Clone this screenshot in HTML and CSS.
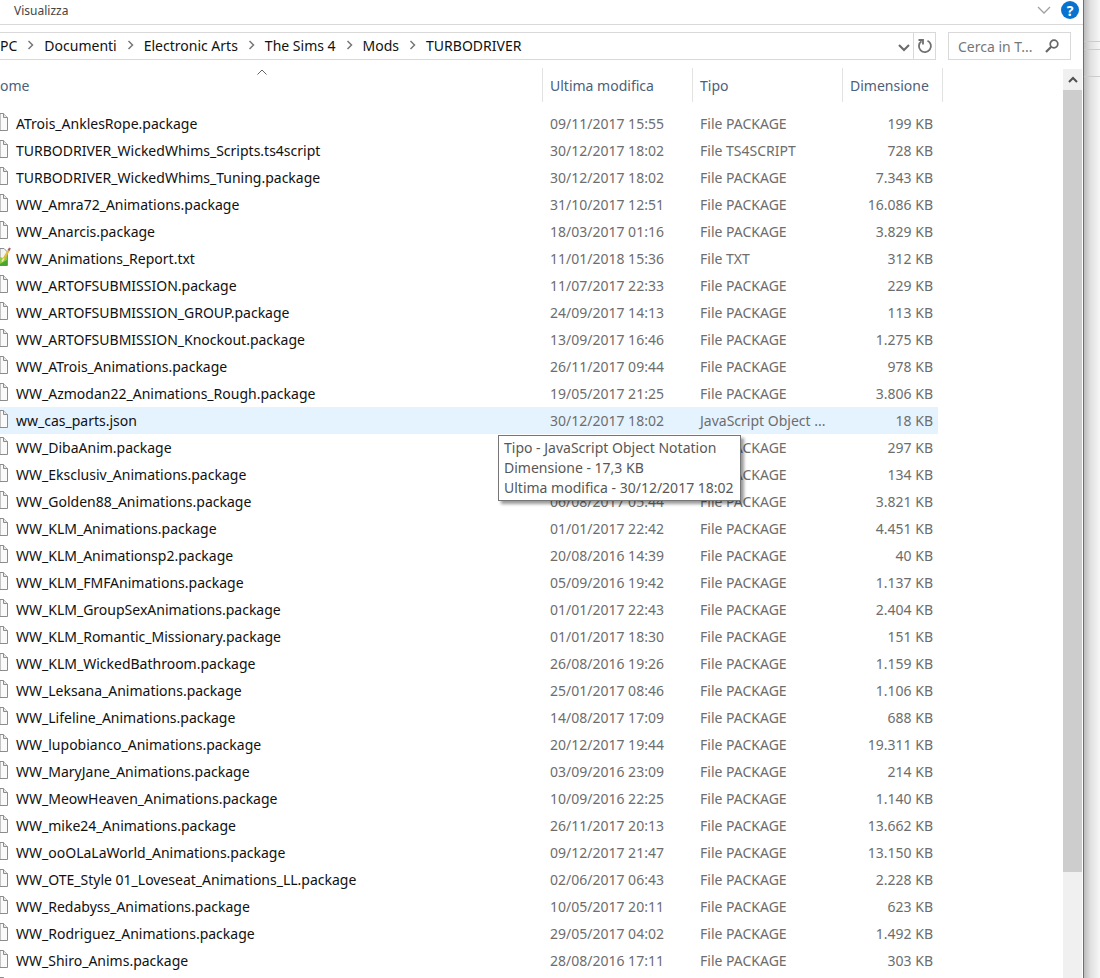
FILE: index.html
```html
<!DOCTYPE html>
<html lang="it">
<head>
    <meta charset="UTF-8">
    <meta name="viewport" content="width=device-width, initial-scale=1.0">
    <title>TURBODRIVER</title>
    <link rel="stylesheet" href="styles.css">
</head>
<body>
    <svg class="simboli">
        <symbol id="file" viewBox="0 0 8 18">
            <path d="M0 .5H3.500L7.500 4.500V17.500H0Z" fill="#fafafa" stroke="#8c8c8c"/>
            <path d="M3.500 .5V4.500H7.500" fill="#e8e8e8" stroke="#8c8c8c"/>
        </symbol>
        <symbol id="txt" viewBox="0 0 11 20">
            <path d="M0 1.500H4L7.500 5V18.500H0Z" fill="#f4f4ee" stroke="#8c8c8c"/>
            <path d="M0 10L3 11L7 8V19H0Z" fill="#8ccb3f"/>
            <path d="M0 17L7 13V19H0Z" fill="#4aa52f"/>
            <path d="M9 3L3.500 12" stroke="#e9b93c" stroke-width="2.200"/>
            <path d="M10 1L8.500 3.500" stroke="#a8636a" stroke-width="2.200"/>
            <path d="M3.800 11.500L2 14.500" stroke="#f6e3b0" stroke-width="1.600"/>
        </symbol>
        <symbol id="freccia" viewBox="0 0 7 10">
            <path d="M1.500 1L5.500 5L1.500 9" fill="none" stroke="#767676" stroke-width="1.500"/>
        </symbol>
    </svg>

    <div class="finestra">
        <div class="ribbon">
            <button class="scheda">Visualizza</button>
            <button class="riduci" aria-label="Riduci barra multifunzione">
                <svg width="14" height="8" viewBox="0 0 14 8"><path d="M1 1L7 7L13 1" fill="none" stroke="#a0a0a0" stroke-width="1.300"/></svg>
            </button>
            <button class="aiuto" aria-label="Guida">?</button>
        </div>

        <div class="navigazione">
            <div class="indirizzo">
                <nav class="percorso">
                    <a href="#">PC</a>
                    <svg><use href="#freccia"/></svg>
                    <a href="#">Documenti</a>
                    <svg><use href="#freccia"/></svg>
                    <a href="#">Electronic Arts</a>
                    <svg><use href="#freccia"/></svg>
                    <a href="#">The Sims 4</a>
                    <svg><use href="#freccia"/></svg>
                    <a href="#">Mods</a>
                    <svg><use href="#freccia"/></svg>
                    <a href="#">TURBODRIVER</a>
                </nav>
                <button class="precedenti" aria-label="Percorsi precedenti">
                    <svg width="12" height="8" viewBox="0 0 12 8"><path d="M1 1L6 6L11 1" fill="none" stroke="#6a6a6a" stroke-width="2"/></svg>
                </button>
                <button class="aggiorna" aria-label="Aggiorna">
                    <svg width="16" height="16" viewBox="0 0 16 16"><path d="M10.500 2.700A6 6 0 1 1 4.500 3.200" fill="none" stroke="#6f6f6f" stroke-width="1.800"/><path d="M1.500 2H6V6.500" fill="none" stroke="#6f6f6f" stroke-width="1.800"/></svg>
                </button>
            </div>
            <div class="cerca">
                <input type="text" aria-label="Cerca" placeholder="Cerca in T...">
                <svg width="14" height="14" viewBox="0 0 14 14"><circle cx="9" cy="5" r="3.800" fill="none" stroke="#666" stroke-width="1.700"/><path d="M6.200 7.800L1 13" stroke="#666" stroke-width="2.200"/></svg>
            </div>
        </div>

        <div class="contenuto">
            <div class="elenco">
                <table>
                    <colgroup>
                        <col>
                        <col class="col-data">
                        <col class="col-tipo">
                        <col class="col-dim">
                        <col class="col-bordo">
                    </colgroup>
                    <thead>
                        <tr>
                            <th class="nome">ome
                                <svg class="ordine" width="10" height="6" viewBox="0 0 10 6"><path d="M.5 5.500L5 1L9.500 5.500" fill="none" stroke="#666"/></svg>
                            </th>
                            <th><span>Ultima modifica</span></th>
                            <th><span>Tipo</span></th>
                            <th><span>Dimensione</span></th>
                            <th><span></span></th>
                        </tr>
                    </thead>
                    <tbody>
                        <tr><td><svg><use href="#file"/></svg>ATrois_AnklesRope.package</td><td>09/11/2017 15:55</td><td>File PACKAGE</td><td>199 KB</td></tr>
                        <tr><td><svg><use href="#file"/></svg>TURBODRIVER_WickedWhims_Scripts.ts4script</td><td>30/12/2017 18:02</td><td>File TS4SCRIPT</td><td>728 KB</td></tr>
                        <tr><td><svg><use href="#file"/></svg>TURBODRIVER_WickedWhims_Tuning.package</td><td>30/12/2017 18:02</td><td>File PACKAGE</td><td>7.343 KB</td></tr>
                        <tr><td><svg><use href="#file"/></svg>WW_Amra72_Animations.package</td><td>31/10/2017 12:51</td><td>File PACKAGE</td><td>16.086 KB</td></tr>
                        <tr><td><svg><use href="#file"/></svg>WW_Anarcis.package</td><td>18/03/2017 01:16</td><td>File PACKAGE</td><td>3.829 KB</td></tr>
                        <tr><td><svg class="txt"><use href="#txt"/></svg>WW_Animations_Report.txt</td><td>11/01/2018 15:36</td><td>File TXT</td><td>312 KB</td></tr>
                        <tr><td><svg><use href="#file"/></svg>WW_ARTOFSUBMISSION.package</td><td>11/07/2017 22:33</td><td>File PACKAGE</td><td>229 KB</td></tr>
                        <tr><td><svg><use href="#file"/></svg>WW_ARTOFSUBMISSION_GROUP.package</td><td>24/09/2017 14:13</td><td>File PACKAGE</td><td>113 KB</td></tr>
                        <tr><td><svg><use href="#file"/></svg>WW_ARTOFSUBMISSION_Knockout.package</td><td>13/09/2017 16:46</td><td>File PACKAGE</td><td>1.275 KB</td></tr>
                        <tr><td><svg><use href="#file"/></svg>WW_ATrois_Animations.package</td><td>26/11/2017 09:44</td><td>File PACKAGE</td><td>978 KB</td></tr>
                        <tr><td><svg><use href="#file"/></svg>WW_Azmodan22_Animations_Rough.package</td><td>19/05/2017 21:25</td><td>File PACKAGE</td><td>3.806 KB</td></tr>
                        <tr class="attiva"><td><svg><use href="#file"/></svg>ww_cas_parts.json</td><td>30/12/2017 18:02
                            <div class="suggerimento" role="tooltip">Tipo - JavaScript Object Notation<br>Dimensione - 17,3 KB<br>Ultima modifica - 30/12/2017 18:02</div>
                        </td><td>JavaScript Object ...</td><td>18 KB</td></tr>
                        <tr><td><svg><use href="#file"/></svg>WW_DibaAnim.package</td><td></td><td>File PACKAGE</td><td>297 KB</td></tr>
                        <tr><td><svg><use href="#file"/></svg>WW_Eksclusiv_Animations.package</td><td></td><td>File PACKAGE</td><td>134 KB</td></tr>
                        <tr><td><svg><use href="#file"/></svg>WW_Golden88_Animations.package</td><td>06/08/2017 05:44</td><td>File PACKAGE</td><td>3.821 KB</td></tr>
                        <tr><td><svg><use href="#file"/></svg>WW_KLM_Animations.package</td><td>01/01/2017 22:42</td><td>File PACKAGE</td><td>4.451 KB</td></tr>
                        <tr><td><svg><use href="#file"/></svg>WW_KLM_Animationsp2.package</td><td>20/08/2016 14:39</td><td>File PACKAGE</td><td>40 KB</td></tr>
                        <tr><td><svg><use href="#file"/></svg>WW_KLM_FMFAnimations.package</td><td>05/09/2016 19:42</td><td>File PACKAGE</td><td>1.137 KB</td></tr>
                        <tr><td><svg><use href="#file"/></svg>WW_KLM_GroupSexAnimations.package</td><td>01/01/2017 22:43</td><td>File PACKAGE</td><td>2.404 KB</td></tr>
                        <tr><td><svg><use href="#file"/></svg>WW_KLM_Romantic_Missionary.package</td><td>01/01/2017 18:30</td><td>File PACKAGE</td><td>151 KB</td></tr>
                        <tr><td><svg><use href="#file"/></svg>WW_KLM_WickedBathroom.package</td><td>26/08/2016 19:26</td><td>File PACKAGE</td><td>1.159 KB</td></tr>
                        <tr><td><svg><use href="#file"/></svg>WW_Leksana_Animations.package</td><td>25/01/2017 08:46</td><td>File PACKAGE</td><td>1.106 KB</td></tr>
                        <tr><td><svg><use href="#file"/></svg>WW_Lifeline_Animations.package</td><td>14/08/2017 17:09</td><td>File PACKAGE</td><td>688 KB</td></tr>
                        <tr><td><svg><use href="#file"/></svg>WW_lupobianco_Animations.package</td><td>20/12/2017 19:44</td><td>File PACKAGE</td><td>19.311 KB</td></tr>
                        <tr><td><svg><use href="#file"/></svg>WW_MaryJane_Animations.package</td><td>03/09/2016 23:09</td><td>File PACKAGE</td><td>214 KB</td></tr>
                        <tr><td><svg><use href="#file"/></svg>WW_MeowHeaven_Animations.package</td><td>10/09/2016 22:25</td><td>File PACKAGE</td><td>1.140 KB</td></tr>
                        <tr><td><svg><use href="#file"/></svg>WW_mike24_Animations.package</td><td>26/11/2017 20:13</td><td>File PACKAGE</td><td>13.662 KB</td></tr>
                        <tr><td><svg><use href="#file"/></svg>WW_ooOLaLaWorld_Animations.package</td><td>09/12/2017 21:47</td><td>File PACKAGE</td><td>13.150 KB</td></tr>
                        <tr><td><svg><use href="#file"/></svg>WW_OTE_Style 01_Loveseat_Animations_LL.package</td><td>02/06/2017 06:43</td><td>File PACKAGE</td><td>2.228 KB</td></tr>
                        <tr><td><svg><use href="#file"/></svg>WW_Redabyss_Animations.package</td><td>10/05/2017 20:11</td><td>File PACKAGE</td><td>623 KB</td></tr>
                        <tr><td><svg><use href="#file"/></svg>WW_Rodriguez_Animations.package</td><td>29/05/2017 04:02</td><td>File PACKAGE</td><td>1.492 KB</td></tr>
                        <tr><td><svg><use href="#file"/></svg>WW_Shiro_Anims.package</td><td>28/08/2016 17:11</td><td>File PACKAGE</td><td>303 KB</td></tr>
                        <tr><td><svg><use href="#file"/></svg></td><td></td><td></td><td></td></tr>
                    </tbody>
                </table>
            </div>
            <div class="scorrimento">
                <button aria-label="Scorri in alto">
                    <svg width="10" height="7" viewBox="0 0 10 7"><path d="M1 6L5 2L9 6" fill="none" stroke="#505050" stroke-width="2"/></svg>
                </button>
                <div class="cursore"></div>
            </div>
        </div>
    </div>

    <div class="sfondo">
        <div class="sfondo-alto"></div>
        <div class="sfondo-riga"></div>
        <div class="sfondo-barra"></div>
    </div>
</body>
</html>
```
FILE: styles.css
```css
* {
    box-sizing: border-box;
}
body {
    margin: 0;
    display: flex;
    height: 100vh;
    overflow: hidden;
    font-family: 'Noto Sans', 'Open Sans', sans-serif;
    font-size: 14px;
    color: #111;
    background-color: #fff;
}
button {
    padding: 0;
    border: none;
    background: none;
    font-family: inherit;
    display: flex;
    align-items: center;
    justify-content: center;
}
.simboli {
    position: absolute;
    width: 0;
    height: 0;
}
.finestra {
    flex: 1;
    min-width: 0;
    display: flex;
    flex-direction: column;
    border-right: 1px solid #3c7f9f;
}

/* barra in alto */
.ribbon {
    display: flex;
    align-items: center;
    gap: 10px;
    height: 25px;
    padding: 0 4px 4px 14px;
    border-bottom: 1px solid #d9d9d9;
}
.scheda {
    margin-right: auto;
    font-size: 12px;
    color: #444;
}
.aiuto {
    width: 18px;
    height: 18px;
    border-radius: 50%;
    background-color: #0873cf;
    color: #fff;
    font-size: 14px;
    font-weight: bold;
}

/* indirizzo e ricerca */
.navigazione {
    display: flex;
    gap: 12px;
    padding: 7px 12px 8px 0;
}
.indirizzo {
    flex: 1;
    display: flex;
    height: 28px;
    border: 1px solid #d9d9d9;
    border-left: none;
}
.percorso {
    flex: 1;
    display: flex;
    align-items: center;
    gap: 10px;
    padding-bottom: 2px;
}
.percorso a {
    color: #111;
    text-decoration: none;
}
.percorso svg {
    width: 7px;
    height: 10px;
}
.precedenti {
    width: 18px;
    padding-top: 3px;
}
.aggiorna {
    width: 22px;
    border-left: 1px solid #d9d9d9;
}
.cerca {
    display: flex;
    align-items: center;
    width: 123px;
    padding: 0 11px 0 9px;
    border: 1px solid #d9d9d9;
}
.cerca input {
    flex: 1;
    min-width: 0;
    padding: 0;
    border: none;
    outline: none;
    font-family: inherit;
    font-size: 14px;
}
.cerca input::placeholder {
    color: #767676;
}

/* elenco dei file */
.contenuto {
    flex: 1;
    min-height: 0;
    display: flex;
}
.elenco {
    flex: 1;
    overflow: hidden;
}
table {
    width: calc(100% - 120px);
    table-layout: fixed;
    border-collapse: collapse;
}
.col-data, .col-tipo {
    width: 150px;
}
.col-dim {
    width: 96px;
}
.col-bordo {
    width: 5px;
}
th {
    height: 42px;
    padding: 0;
    vertical-align: top;
    font-weight: normal;
    line-height: 36px;
    text-align: left;
    white-space: nowrap;
    color: #4c607a;
}
th span {
    display: block;
    height: 34px;
    padding-left: 7px;
    border-left: 1px solid #e2e2e2;
}
th:last-child span {
    padding: 0;
    border-left: none;
    border-right: 1px solid #e2e2e2;
}
.nome {
    position: relative;
}
.ordine {
    position: absolute;
    top: 1px;
    left: calc(50% - 14px);
}
td {
    height: 27px;
    padding: 0 0 0 8px;
    line-height: 27px;
    white-space: nowrap;
    color: #6d6d6d;
}
td:first-child {
    padding: 0;
    color: #111;
}
td:nth-child(4) {
    padding: 0 5px 0 0;
    text-align: right;
}
td svg {
    width: 8px;
    height: 18px;
    margin-right: 8px;
    vertical-align: -2px;
}
td .txt {
    width: 11px;
    height: 20px;
    margin-right: 5px;
    vertical-align: -3px;
}
.attiva td {
    position: relative;
    background-color: #e5f3ff;
}
.suggerimento {
    position: absolute;
    z-index: 1;
    top: 28px;
    left: -44px;
    padding: 2px 6px 2px 5px;
    border: 1px solid #767676;
    background-color: #fff;
    box-shadow: 3px 3px 3px rgba(0, 0, 0, 0.4);
    line-height: 20px;
    color: #575757;
}

/* barra di scorrimento */
.scorrimento {
    width: 20px;
    margin-top: 1px;
    border-right: 1px solid #fff;
    background-color: #f0f0f0;
}
.scorrimento button {
    width: 19px;
    height: 21px;
}
.cursore {
    height: 86%;
    background-color: #cdcdcd;
}

/* finestra dietro */
.sfondo {
    width: 16px;
    background: linear-gradient(to right, #bcbcbc, #e0e0e0 40%, #f7f7f7);
}
.sfondo-alto {
    height: 42px;
    border-bottom: 1px solid #ccc;
}
.sfondo-riga {
    height: 8px;
    border-bottom: 1px solid #ccc;
}
.sfondo-barra {
    height: 27px;
    border-bottom: 1px solid #ccc;
}
```
